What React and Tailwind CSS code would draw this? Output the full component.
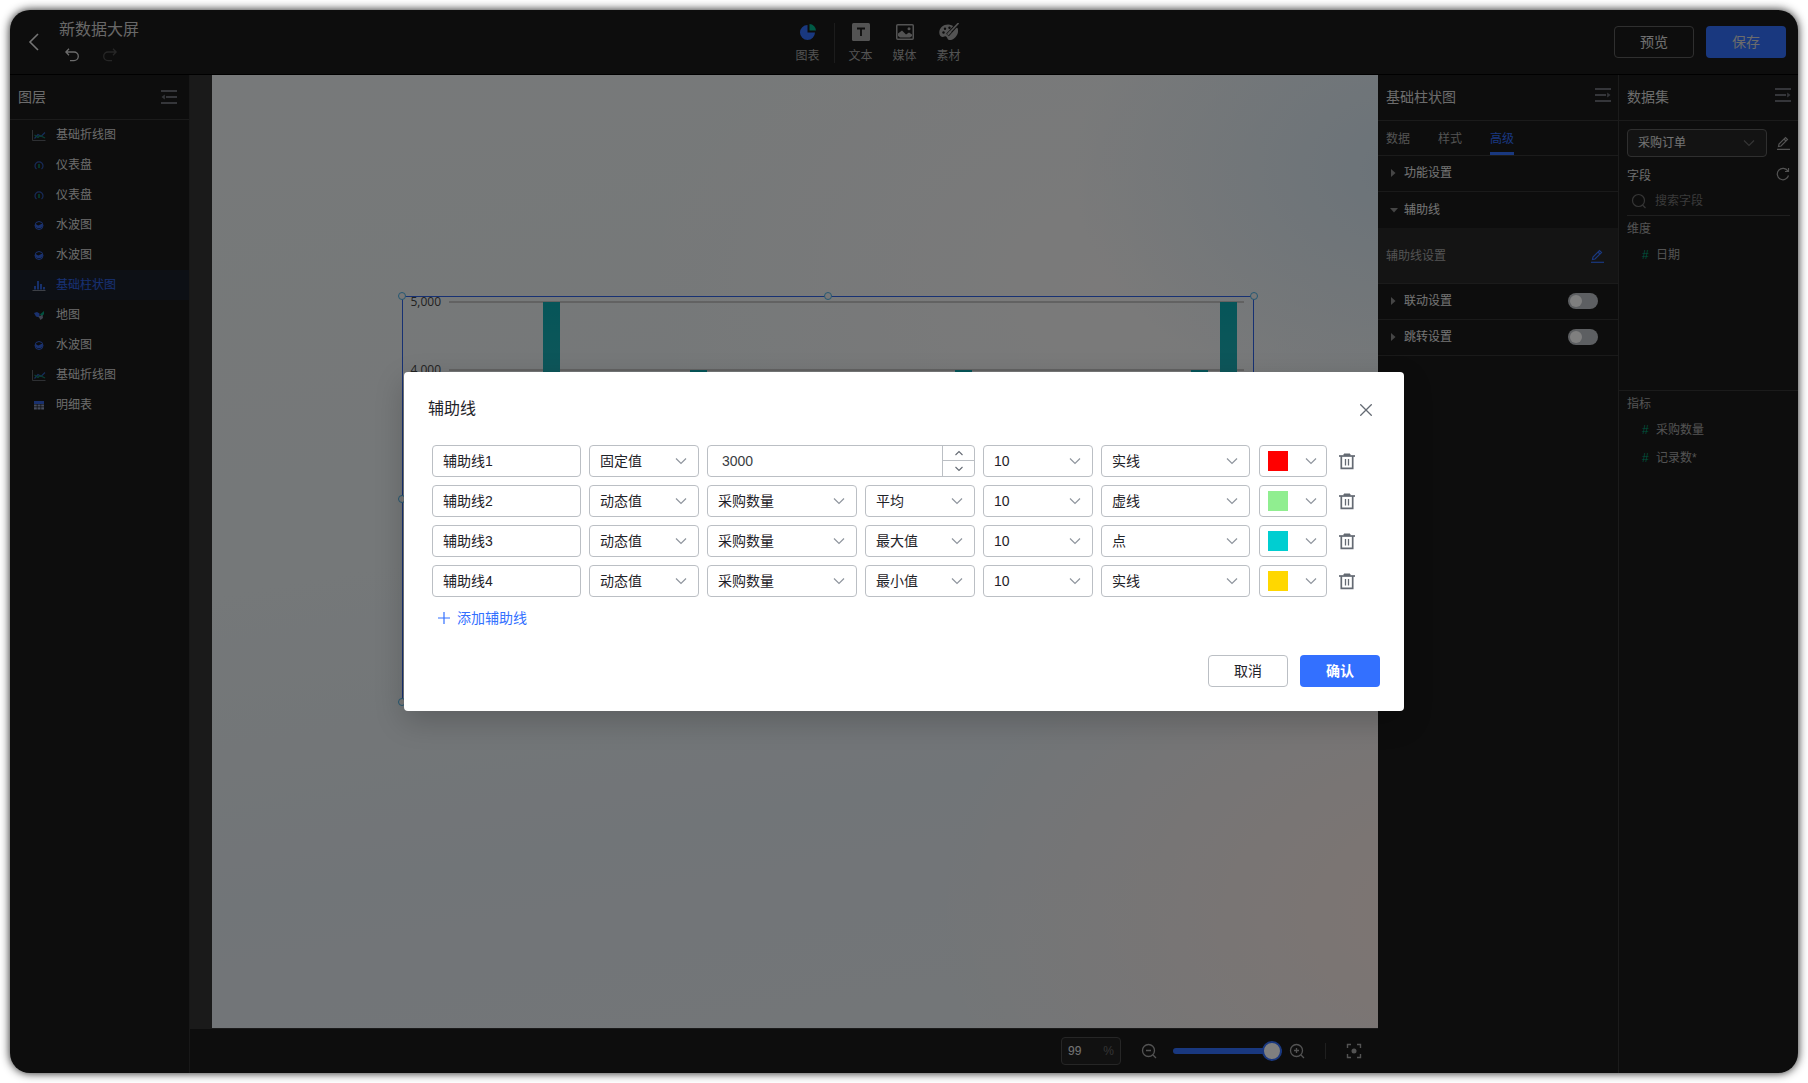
import React, { useState } from 'react';

const layers = [
  { name: '基础折线图', icon: 'line' },
  { name: '仪表盘', icon: 'gauge' },
  { name: '仪表盘', icon: 'gauge' },
  { name: '水波图', icon: 'liquid' },
  { name: '水波图', icon: 'liquid' },
  { name: '基础柱状图', icon: 'bar', active: true },
  { name: '地图', icon: 'map' },
  { name: '水波图', icon: 'liquid' },
  { name: '基础折线图', icon: 'line' },
  { name: '明细表', icon: 'table' },
];

const initialLines = [
  { id: 1, name: '辅助线1', type: '固定值', value: '3000', size: '10', style: '实线', color: '#ff0000' },
  { id: 2, name: '辅助线2', type: '动态值', field: '采购数量', calc: '平均', size: '10', style: '虚线', color: '#90ee90' },
  { id: 3, name: '辅助线3', type: '动态值', field: '采购数量', calc: '最大值', size: '10', style: '点', color: '#00ced1' },
  { id: 4, name: '辅助线4', type: '动态值', field: '采购数量', calc: '最小值', size: '10', style: '实线', color: '#ffd700' },
];

function LayerIcon({ type }) {
  return (
    <svg viewBox="0 0 14 14" className="h-3.5 w-3.5 shrink-0" fill="none">
      {type === 'line' && (
        <>
          <path d="M0.500 2v10.500h13" stroke="#5c6066" />
          <path d="M2.500 10.500l3.500-4 3 2 4-4" stroke="#2c5cb8" strokeWidth="1.200" />
          <path d="M2.500 7l3.500 2.500 2-2 5 2.500" stroke="#14806a" strokeWidth="1.200" />
        </>
      )}
      {type === 'gauge' && (
        <>
          <path d="M4.500 11A4 4 0 1 1 9.500 11" stroke="#2f55b0" strokeWidth="1.200" />
          <path d="M7 6v4" stroke="#00a27c" strokeWidth="1.200" />
        </>
      )}
      {type === 'liquid' && (
        <>
          <circle cx="7" cy="7.500" r="4" stroke="#3463dd" />
          <path d="M3 6c1.500-.5 2.500 2 4 1.300S9.500 5.500 11 6.500a4 4 0 1 1-8-.5z" fill="#3463dd" />
        </>
      )}
      {type === 'bar' && (
        <>
          <path d="M0.500 12.500h13" stroke="#7a808c" />
          <path d="M3 11.500V8M6 11.500V3M9 11.500V6M12 11.500V9" stroke="#3370ff" strokeWidth="1.600" />
        </>
      )}
      {type === 'map' && (
        <>
          <path d="M2 5l3-1 2.500 1.500L7.500 9.500 4 8.500z" fill="#3463dd" />
          <path d="M8 6.500L12 3v3L10 8.500z" fill="#00a27c" />
          <path d="M6.500 8.500L10.500 7l.5 3L8.500 12z" fill="#8089a0" />
        </>
      )}
      {type === 'table' && (
        <>
          <path d="M2 3h10v3H2z" fill="#3463dd" />
          <path d="M2 6.500h2.800v2H2zM5.500 6.500h3v2h-3zM9.200 6.500H12v2H9.200zM2 9.300h2.800v2.200H2zM5.500 9.300h3v2.200h-3zM9.200 9.300H12v2.200H9.200z" fill="#8e9bbd" />
        </>
      )}
    </svg>
  );
}

function FoldIcon({ flip }) {
  return (
    <svg viewBox="0 0 16 14" className={`h-3.5 w-4 ${flip ? '-scale-x-100' : ''}`} fill="none">
      <path d="M0 1h16M5 7h11M0 13h16" stroke="#6a6d74" strokeWidth="2" />
      <path d="M0.500 7L3.800 4.500v5z" fill="#6a6d74" />
    </svg>
  );
}

function PencilIcon() {
  return (
    <svg viewBox="0 0 14 14" className="h-3.5 w-3.5" fill="none" stroke="currentColor" strokeWidth="1.200">
      <path d="M2.500 10.500L3 8l6.500-6.500 2 2L5 10z" />
      <path d="M8 3l2 2" />
      <path d="M1 13.300h13" />
    </svg>
  );
}

function Chevron({ up, className = 'h-2 w-3' }) {
  return (
    <svg viewBox="0 0 12 8" className={`${className} ${up ? 'rotate-180' : ''}`} fill="none" stroke="currentColor">
      <path d="M1 1.500l5 5 5-5" strokeWidth="1.200" />
    </svg>
  );
}

function StepArrow({ up }) {
  return (
    <svg viewBox="0 0 8 6" className={`h-1.5 w-2 ${up ? 'rotate-180' : ''}`} fill="none" stroke="currentColor">
      <path d="M0.500 1l3.500 3.500L7.500 1" strokeWidth="1.100" />
    </svg>
  );
}

function TrashIcon() {
  return (
    <svg viewBox="0 0 16 18" className="h-[18px] w-4" fill="none" stroke="#646a73" strokeWidth="1.700">
      <path d="M0 4h16" />
      <path d="M5 2h6v1.500H5z" fill="#646a73" strokeWidth="1" />
      <path d="M2.300 4v12.300h11.400V4" />
      <path d="M6.500 7v6.500M9.500 7v6.500" strokeWidth="1.300" />
    </svg>
  );
}

function ZoomIcon({ plus }) {
  return (
    <svg viewBox="0 0 16 16" className="h-4 w-4" fill="none" stroke="#a6a6a6" strokeWidth="1.300">
      <circle cx="7.500" cy="7.500" r="6" />
      <path d="M12 12l3 3M5 7.500h5" />
      {plus && <path d="M7.500 5v5" />}
    </svg>
  );
}

function Select({ label, value, options = [], className }) {
  return (
    <div className={`relative h-8 ${className}`}>
      <select
        aria-label={label}
        defaultValue={value}
        className="h-full w-full appearance-none rounded border border-[#bbbfc4] bg-white pr-8 pl-2.5 text-sm text-[#1f2329] outline-none"
      >
        {[value, ...options.filter((o) => o !== value)].map((o) => (
          <option key={o}>{o}</option>
        ))}
      </select>
      <span className="pointer-events-none absolute inset-y-0 right-3 flex items-center text-[#8f959e]">
        <Chevron />
      </span>
    </div>
  );
}

function ToolItem({ label, children }) {
  return (
    <button className="flex w-11 flex-col items-center gap-1.5 text-xs leading-4 text-[#a6a6a6]">
      <span className="flex h-5 items-center">{children}</span>
      {label}
    </button>
  );
}

function Header() {
  return (
    <header className="flex h-[65px] shrink-0 items-center justify-between border-b border-black bg-[#1a1a1a] pr-3 pl-4">
      <div className="flex flex-1 items-center gap-4">
        <button aria-label="返回" className="text-[#ebebeb]">
          <svg viewBox="0 0 16 18" className="h-[18px] w-4" fill="none" stroke="currentColor" strokeWidth="1.600">
            <path d="M12 1L4 9l8 8" />
          </svg>
        </button>
        <div className="pb-0.5">
          <h1 className="pl-px text-base leading-5 text-[#d0d0d0]">新数据大屏</h1>
          <div className="mt-2 flex gap-6 pl-[7px]">
            <button aria-label="撤销" className="text-[#d8d8d8]">
              <svg viewBox="0 0 14 14" className="h-3.5 w-3.5" fill="none" stroke="currentColor" strokeWidth="1.300">
                <path d="M4 0.800L0.900 4 4 7.200M1 4h8a4.300 4.300 0 0 1 0 8.600H5" />
              </svg>
            </button>
            <button aria-label="重做" className="text-[#4c4c4c]">
              <svg viewBox="0 0 14 14" className="h-3.5 w-3.5 -scale-x-100" fill="none" stroke="currentColor" strokeWidth="1.300">
                <path d="M4 0.800L0.900 4 4 7.200M1 4h8a4.300 4.300 0 0 1 0 8.600H5" />
              </svg>
            </button>
          </div>
        </div>
      </div>
      <div className="flex items-center pt-0.5 pr-14">
        <ToolItem label="图表">
          <svg viewBox="0 0 16 16" className="h-4 w-4">
            <path d="M7.500 1A7.500 7.500 0 1 0 15 8.500H7.500z" fill="#3370ff" />
            <path d="M9.500 0A7 7 0 0 1 16 6.500H9.500z" fill="#00b48a" />
          </svg>
        </ToolItem>
        <span className="mx-1 h-10 w-px bg-[#383838]" />
        <ToolItem label="文本">
          <svg viewBox="0 0 18 18" className="h-[18px] w-[18px]">
            <rect width="18" height="18" rx="1.500" fill="#a6a6a6" />
            <path d="M5 5.500h8M9 5.500V13" stroke="#1a1a1a" strokeWidth="1.800" />
          </svg>
        </ToolItem>
        <ToolItem label="媒体">
          <svg viewBox="0 0 18 16" className="h-4 w-[18px]" fill="none">
            <rect x="0.750" y="0.750" width="16.500" height="14.500" rx="1" stroke="#a6a6a6" strokeWidth="1.500" />
            <path d="M2 9.500l4-3 4 4 3-2 3 2V12l-2 1.500H4L2 12z" fill="#a6a6a6" />
            <circle cx="13" cy="4.800" r="1.500" fill="#a6a6a6" />
          </svg>
        </ToolItem>
        <ToolItem label="素材">
          <svg viewBox="0 0 20 18" className="h-[18px] w-5" fill="none">
            <path d="M12.500 2.200C7 0 0 3.500 0.300 10c.2 4 3.500 4.500 5.200 3.500 1.500-.8 2.500.5 3 2 .8 2.300 4 2 6.500 0 3.500-2.500 5-7 3.500-10.500z" fill="#a6a6a6" />
            <circle cx="4.500" cy="9.500" r="1.200" fill="#1a1a1a" />
            <circle cx="6" cy="5.800" r="1.200" fill="#1a1a1a" />
            <circle cx="10.500" cy="4.800" r="1.200" fill="#1a1a1a" />
            <path d="M19.500 0L8.500 12" stroke="#1a1a1a" strokeWidth="3.600" />
            <path d="M19.500 0L12 8" stroke="#a6a6a6" strokeWidth="1.600" />
            <path d="M12 8l-3.300 3.800" stroke="#a6a6a6" strokeWidth="2.200" />
          </svg>
        </ToolItem>
      </div>
      <div className="flex flex-1 justify-end gap-3 text-sm">
        <button className="h-8 w-20 rounded border border-[#5f5f5f] text-[#e0e0e0]">预览</button>
        <button className="h-8 w-20 rounded bg-[#3370ff] text-[#d8d8d8]">保存</button>
      </div>
    </header>
  );
}

function LayerPanel() {
  return (
    <aside className="w-[180px] shrink-0 border-r border-[#303030] bg-[#1a1a1a]">
      <div className="flex h-[45px] items-center justify-between border-b border-[#363636] pr-3 pl-2">
        <h2 className="text-sm text-[#d8d8d8]">图层</h2>
        <button aria-label="收起图层">
          <FoldIcon />
        </button>
      </div>
      <ul>
        {layers.map((layer, i) => (
          <li key={i}>
            <button
              className={`flex h-[30px] w-full items-center gap-2.5 pl-[22px] text-xs ${
                layer.active ? 'bg-[#1b202b] text-[#2f63e6]' : 'text-[#d8d8d8]'
              }`}
            >
              <LayerIcon type={layer.icon} />
              {layer.name}
            </button>
          </li>
        ))}
      </ul>
    </aside>
  );
}

function BarChart() {
  const bars = [
    { x: 141, y: 6 },
    { x: 288, y: 74 },
    { x: 553, y: 74 },
    { x: 789, y: 74 },
    { x: 818, y: 6 },
  ];
  const ticks = ['5,000', '4,000', '3,000', '2,000', '1,000', '0'];
  return (
    <svg viewBox="0 0 852 406" className="h-full w-full overflow-visible">
      <defs>
        <linearGradient id="bar" x1="0" y1="0" x2="0" y2="1">
          <stop offset="0" stopColor="#0cabb2" />
          <stop offset="1" stopColor="#5fb6bd" />
        </linearGradient>
      </defs>
      {ticks.map((t, i) => (
        <g key={t}>
          <path d={`M47 ${6 + i * 68}H842`} stroke="#c4c4c4" strokeWidth="2" />
          <text x="39" y={10 + i * 68} textAnchor="end" fontSize="12" fill="#444" className="font-['Open_Sans']">
            {t}
          </text>
        </g>
      ))}
      {bars.map((b) => (
        <rect key={b.x} x={b.x} y={b.y} width="17" height={346 - b.y} fill="url(#bar)" />
      ))}
      <path d="M0.500 0.500h851v405h-851z" stroke="#2f63e6" fill="none" />
      {[[0, 0], [426, 0], [852, 0], [0, 203], [852, 203], [0, 406], [426, 406], [852, 406]].map(([x, y]) => (
        <circle key={`${x}-${y}`} cx={x} cy={y} r="3.500" fill="#eee" stroke="#4ab0e6" />
      ))}
    </svg>
  );
}

function Workspace() {
  return (
    <main className="flex min-w-0 flex-1 flex-col">
      <div className="flex min-h-0 flex-1 bg-[#343434] pl-[22px]">
        <div className="relative flex-1 bg-[radial-gradient(ellipse_at_103%_10%,#d6e6f2_0%,transparent_20%),radial-gradient(ellipse_at_108%_88%,#fdeae3_0%,transparent_30%),radial-gradient(ellipse_at_76%_22%,#f6f5f5_0%,transparent_36%),linear-gradient(170deg,#eff3f4_0%,#eaf0f2_45%,#e3eaf0_72%,#e8edf0_100%)]">
          <div className="absolute top-[221px] left-[190px] h-[406px] w-[852px]">
            <BarChart />
          </div>
        </div>
      </div>
      <footer className="flex h-[45px] shrink-0 items-center justify-end border-t border-[#343434] bg-[#1a1a1a] pr-4">
        <label className="flex h-7 w-15 items-center rounded border border-[#4c4c4c] bg-[#222] px-1.5 text-xs text-[#6a6a6a]">
          <input aria-label="缩放比例" defaultValue="99" className="w-8 min-w-0 flex-1 bg-transparent text-[#e8e8e8] outline-none" />
          %
        </label>
        <button aria-label="缩小" className="mr-4 ml-5">
          <ZoomIcon />
        </button>
        <input
          type="range"
          aria-label="画布缩放"
          defaultValue="100"
          className="h-1.5 w-[109px] appearance-none rounded bg-[#3370ff] [&::-webkit-slider-thumb]:h-5 [&::-webkit-slider-thumb]:w-5 [&::-webkit-slider-thumb]:appearance-none [&::-webkit-slider-thumb]:rounded-full [&::-webkit-slider-thumb]:border-2 [&::-webkit-slider-thumb]:border-[#3370ff] [&::-webkit-slider-thumb]:bg-white"
        />
        <button aria-label="放大" className="ml-[7px]">
          <ZoomIcon plus />
        </button>
        <span className="mx-5 h-4 w-px bg-[#3f3f3f]" />
        <button aria-label="适应画布">
          <svg viewBox="0 0 16 16" className="h-4 w-4" fill="none" stroke="#a6a6a6" strokeWidth="1.400">
            <path d="M1.500 5V1.500H5M11 1.500h3.500V5M14.500 11v3.500H11M5 14.500H1.500V11" />
            <circle cx="8" cy="8" r="2.500" fill="#a6a6a6" stroke="none" />
          </svg>
        </button>
      </footer>
    </main>
  );
}

function SettingRow({ label, open, hasSwitch }) {
  return (
    <div className={`flex h-9 items-center justify-between pr-5 pl-3 ${open ? '' : 'border-b border-[#343434] pb-0.5'}`}>
      <button className="flex items-center gap-1.5 text-xs text-[#e8e8e8]">
        <svg viewBox="0 0 8 8" className="h-2 w-2">
          <path d={open ? 'M0 2l4 4.500L8 2z' : 'M1 0l4.500 4L1 8z'} fill="#8a8a8a" />
        </svg>
        {label}
      </button>
      {hasSwitch && (
        <button role="switch" aria-checked="false" aria-label={label} className="h-4 w-[30px] rounded-full bg-[#bbbfc4] p-0.5">
          <span className="block h-3 w-3 rounded-full bg-white" />
        </button>
      )}
    </div>
  );
}

function PanelHeader({ title }) {
  return (
    <div className="flex h-[46px] items-center justify-between border-b border-[#363636] pr-[7px] pb-0.5 pl-2">
      <h2 className="text-sm text-[#d8d8d8]">{title}</h2>
      <button aria-label={`收起${title}`} className="mb-1">
        <FoldIcon flip />
      </button>
    </div>
  );
}

function ConfigPanel() {
  return (
    <aside className="w-[241px] shrink-0 border-r border-[#363636] bg-[#1a1a1a]">
      <PanelHeader title="基础柱状图" />
      <nav className="flex h-[35px] gap-7 border-b border-[#363636] px-2 text-xs text-[#a6a6a6]">
        <button className="pt-0.5">数据</button>
        <button className="pt-0.5">样式</button>
        <button className="border-b-3 border-[#3370ff] pt-[5px] text-[#3370ff]">高级</button>
      </nav>
      <SettingRow label="功能设置" />
      <SettingRow label="辅助线" open />
      <div className="flex h-[56px] items-center justify-between border-b border-[#363636] bg-[#292929] pr-3.5 pl-2 text-xs text-[#a6a6a6]">
        辅助线设置
        <button aria-label="编辑辅助线" className="text-[#3370ff]">
          <PencilIcon />
        </button>
      </div>
      <SettingRow label="联动设置" hasSwitch />
      <SettingRow label="跳转设置" hasSwitch />
    </aside>
  );
}

function Field({ name }) {
  return (
    <li className="flex h-7 items-center gap-1.5 pl-[23px]">
      <span className="w-2 text-[#00a27c]">#</span>
      {name}
    </li>
  );
}

function DatasetPanel() {
  return (
    <aside className="w-[179px] shrink-0 bg-[#1a1a1a] text-xs">
      <PanelHeader title="数据集" />
      <div className="flex items-center justify-between pt-2 pr-2 pl-2 text-[#a6a6a6]">
        <div className="relative h-7 w-[140px]">
          <select aria-label="数据集" className="h-full w-full appearance-none rounded border border-[#5f5f5f] bg-[#262626] pl-2.5 text-[#e8e8e8] outline-none">
            <option>采购订单</option>
          </select>
          <span className="pointer-events-none absolute inset-y-0 right-3 flex items-center text-[#6a6a6a]">
            <Chevron />
          </span>
        </div>
        <button aria-label="编辑数据集">
          <PencilIcon />
        </button>
      </div>
      <div className="flex h-9 items-center justify-between pr-2 pl-2 text-[#d8d8d8]">
        <h3 className="pt-0.5">字段</h3>
        <button aria-label="刷新字段" className="pb-0.5">
          <svg viewBox="0 0 14 14" className="h-3.5 w-3.5" fill="none" stroke="#a6a6a6" strokeWidth="1.200">
            <path d="M12.500 8.500A5.700 5.700 0 1 1 11.800 4M12.500 1v3.500H9" />
          </svg>
        </button>
      </div>
      <label className="mx-2 flex h-[23px] items-start gap-2 border-b border-[#3f3f3f] pl-1">
        <svg viewBox="0 0 16 16" className="h-4 w-4" fill="none" stroke="#6a6a6a" strokeWidth="1.200">
          <circle cx="7.500" cy="7.500" r="6" />
          <path d="M11.500 12l3 3" />
        </svg>
        <input aria-label="搜索字段" placeholder="搜索字段" className="w-28 min-w-0 bg-transparent leading-4 outline-none placeholder:text-[#757575]" />
      </label>
      <section className="h-[175px] border-b border-[#363636] pt-[5px] text-[#a6a6a6]">
        <h3 className="pl-2">维度</h3>
        <ul className="pt-1">
          <Field name="日期" />
        </ul>
      </section>
      <section className="pt-[5px] text-[#a6a6a6]">
        <h3 className="pl-2">指标</h3>
        <ul className="pt-1">
          <Field name="采购数量" />
          <Field name="记录数*" />
        </ul>
      </section>
    </aside>
  );
}

function NumberField({ value }) {
  return (
    <div className="flex h-8 w-[268px] overflow-hidden rounded border border-[#bbbfc4] text-sm">
      <input aria-label="固定值" defaultValue={value} className="min-w-0 flex-1 pl-3.5 text-[#3a3d42] outline-none" />
      <div className="flex w-8 flex-col border-l border-[#bbbfc4] text-[#646a73]">
        <button aria-label="增加" className="flex h-[15px] items-center justify-center border-b border-[#bbbfc4]">
          <StepArrow up />
        </button>
        <button aria-label="减少" className="flex h-[15px] items-center justify-center">
          <StepArrow />
        </button>
      </div>
    </div>
  );
}

function AssistLineRow({ line, onRemove }) {
  return (
    <div className="flex gap-2">
      <input
        aria-label="名称"
        defaultValue={line.name}
        className="h-8 w-[149px] rounded border border-[#bbbfc4] px-2.5 pb-0.5 text-sm text-[#1f2329] outline-none"
      />
      <Select label="类型" value={line.type} options={['固定值', '动态值']} className="w-[110px]" />
      {line.type === '固定值' ? (
        <NumberField value={line.value} />
      ) : (
        <>
          <Select label="字段" value={line.field} options={['记录数*']} className="w-[150px]" />
          <Select label="计算方式" value={line.calc} options={['平均', '最大值', '最小值']} className="w-[110px]" />
        </>
      )}
      <Select label="字号" value={line.size} options={['12', '14', '16']} className="w-[110px]" />
      <Select label="线型" value={line.style} options={['实线', '虚线', '点']} className="w-[149px]" />
      <button aria-label="颜色" className="ml-px flex h-8 w-[68px] items-center justify-between rounded border border-[#bbbfc4] pr-[9px] pl-2 text-[#8f959e]">
        <span className="h-5 w-5" style={{ backgroundColor: line.color }} />
        <Chevron />
      </button>
      <button aria-label="删除" onClick={onRemove} className="ml-1 flex items-center">
        <TrashIcon />
      </button>
    </div>
  );
}

function AssistLineModal({ onClose }) {
  const [lines, setLines] = useState(initialLines);

  const addLine = () => {
    const id = Math.max(0, ...lines.map((l) => l.id)) + 1;
    setLines([...lines, { id, name: `辅助线${id}`, type: '固定值', value: '0', size: '10', style: '实线', color: '#ff0000' }]);
  };

  return (
    <div className="absolute inset-0 z-50 flex items-center justify-center bg-black/50">
      <div role="dialog" aria-labelledby="modal-title" className="w-[1000px] rounded-sm bg-white p-6 shadow-[0_10px_30px_rgba(0,0,0,0.2)]">
        <div className="flex h-6 items-center justify-between pr-2">
          <h2 id="modal-title" className="pt-0.5 text-base text-[#1f2329]">辅助线</h2>
          <button aria-label="关闭" onClick={onClose} className="mt-1">
            <svg viewBox="0 0 12 12" className="h-3 w-3" fill="none" stroke="#646a73" strokeWidth="1.300">
              <path d="M0.300 0.300l11.400 11.400M11.700 0.300L0.300 11.700" />
            </svg>
          </button>
        </div>
        <div className="mt-[25px] flex flex-col gap-2 pl-1">
          {lines.map((line) => (
            <AssistLineRow key={line.id} line={line} onRemove={() => setLines(lines.filter((l) => l.id !== line.id))} />
          ))}
        </div>
        <button onClick={addLine} className="mt-[9px] ml-2.5 flex h-6 items-center gap-[7px] text-sm text-[#3370ff]">
          <svg viewBox="0 0 12 12" className="h-3 w-3" stroke="currentColor" strokeWidth="1.200">
            <path d="M6 0v12M0 6h12" />
          </svg>
          添加辅助线
        </button>
        <div className="mt-[25px] flex justify-end gap-3 text-sm">
          <button onClick={onClose} className="h-8 w-20 rounded border border-[#bbbfc4] text-[#1f2329]">取消</button>
          <button onClick={onClose} className="h-8 w-20 rounded bg-[#3370ff] font-bold text-white">确认</button>
        </div>
      </div>
    </div>
  );
}

export default function App() {
  const [open, setOpen] = useState(true);

  return (
    <div className="h-screen bg-white p-2.5 font-['Liberation_Sans','Noto_Sans_CJK_SC',sans-serif]">
      <div className="relative flex h-full flex-col overflow-hidden rounded-[20px] shadow-[0_0_10px_rgba(0,0,0,0.9)]">
        <Header />
        <div className="flex min-h-0 flex-1">
          <LayerPanel />
          <Workspace />
          <ConfigPanel />
          <DatasetPanel />
        </div>
        {open && <AssistLineModal onClose={() => setOpen(false)} />}
      </div>
    </div>
  );
}
